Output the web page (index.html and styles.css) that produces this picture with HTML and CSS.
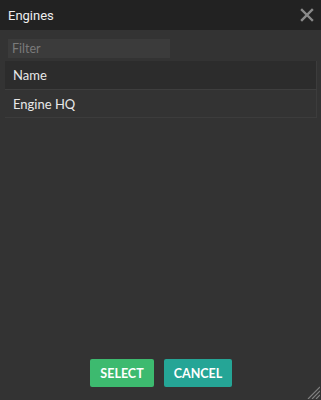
FILE: index.html
```html
<!DOCTYPE html>
<html lang="en">
<head>
  <meta charset="UTF-8" />
  <title>Engines</title>
  <link rel="stylesheet" href="styles.css">
</head>
<body>
  <div class="dialog">
    <div class="dialog-header">
      <span class="dialog-title">Engines</span>
      <span class="close">
        <svg width="14" height="14" viewBox="0 0 14 14"><path d="M2 2L12 12M12 2L2 12" stroke="#8a8a8a" stroke-width="2.4" stroke-linecap="square"/></svg>
      </span>
    </div>
    <div class="dialog-body">
      <input class="filter" type="text" placeholder="Filter">
      <table class="grid">
        <thead>
          <tr><th>Name</th></tr>
        </thead>
        <tbody>
          <tr><td>Engine HQ</td></tr>
        </tbody>
      </table>
    </div>
    <div class="dialog-footer">
      <button class="btn btn-select">SELECT</button>
      <button class="btn btn-cancel">CANCEL</button>
    </div>
    <svg class="resize" width="14" height="14" viewBox="0 0 14 14">
      <path d="M14 2L2 14M14 6L6 14M14 10L10 14" stroke="#808080" stroke-width="1.2"/>
    </svg>
  </div>
</body>
</html>
```

FILE: styles.css
```css
html, body {
  margin: 0;
  padding: 0;
}
body {
  background-color: #333;
  font-family: Lato, 'Open Sans', sans-serif;
  color: #e8e8e8;
}
.dialog {
  position: relative;
  width: 321px;
  height: 400px;
  display: flex;
  flex-direction: column;
  background-color: #333;
}
.dialog-header {
  height: 30px;
  background-color: #222;
  display: flex;
  align-items: center;
  justify-content: space-between;
  padding: 0 8px 0 8px;
}
.dialog-title {
  font-family: Roboto, 'Liberation Sans', sans-serif;
  font-size: 13px;
  color: #eee;
}
.close {
  display: flex;
  margin-right: -1px;
}
.dialog-body {
  flex: 1;
  padding: 9px 4px 0 5px;
}
.filter {
  display: block;
  box-sizing: border-box;
  width: 162px;
  height: 19px;
  margin-left: 3px;
  border: none;
  outline: none;
  background-color: #3b3b3b;
  color: #ddd;
  font-family: Lato, sans-serif;
  font-size: 12.5px;
  padding: 0 4px;
}
.filter::placeholder {
  color: #7a7a7a;
}
.grid {
  width: 100%;
  margin-top: 3px;
  border-collapse: collapse;
  font-size: 13px;
}
.grid th {
  text-align: left;
  font-weight: normal;
  background-color: #2c2c2c;
  height: 28px;
  padding: 0 8px;
  border-right: 1px solid #3c3c3c;
  border-bottom: 1px solid #3e3e3e;
}
.grid td {
  height: 27px;
  padding: 0 8px;
  border-right: 1px solid #3c3c3c;
  border-bottom: 1px solid #3c3c3c;
}
.dialog-footer {
  display: flex;
  justify-content: center;
  gap: 10px;
  padding: 0 0 13px 1px;
}
.btn {
  border: none;
  border-radius: 2px;
  height: 28px;
  color: #fff;
  font-family: Lato, sans-serif;
  font-weight: bold;
  font-size: 12.5px;
  padding: 0;
}
.btn-select {
  width: 64px;
  background-color: #3dba6f;
}
.btn-cancel {
  width: 68px;
  background-color: #25a596;
}
.resize {
  position: absolute;
  right: 1px;
  bottom: 1px;
}
```
